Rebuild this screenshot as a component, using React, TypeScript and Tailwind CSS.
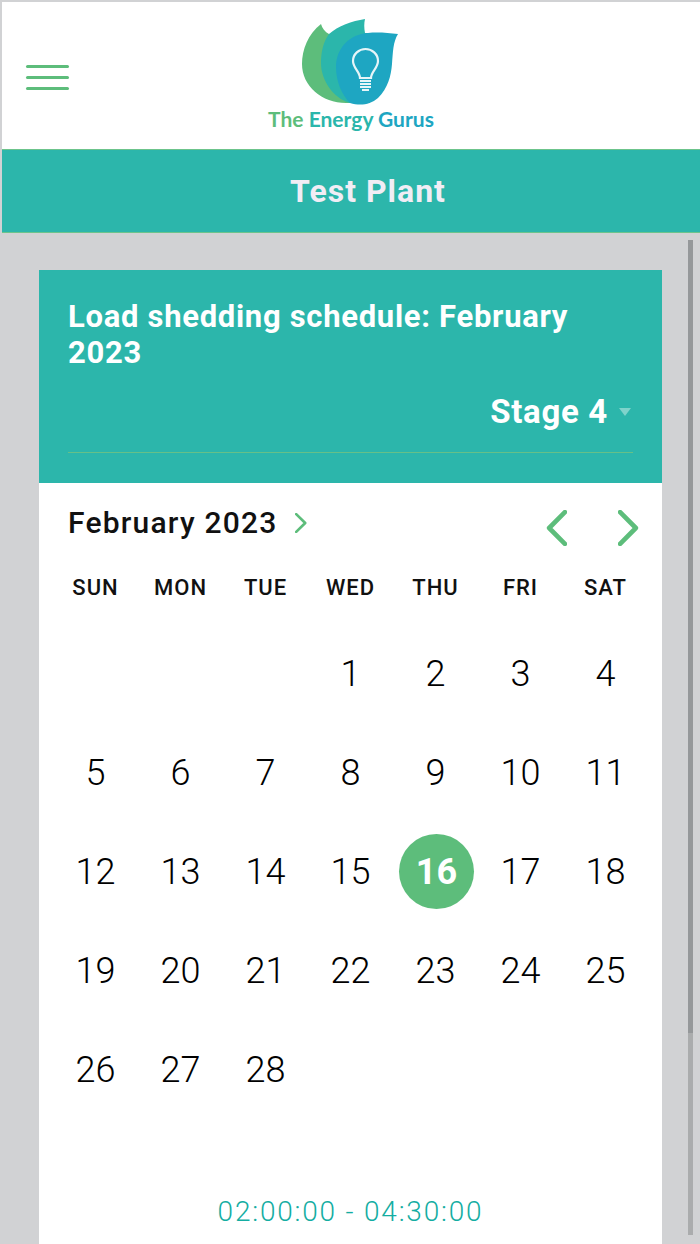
import React from "react";

const weekdays = ["SUN", "MON", "TUE", "WED", "THU", "FRI", "SAT"];
const blanks = [0, 1, 2];
const days = Array.from({ length: 28 }, (_, i) => i + 1);

function Logo() {
  return (
    <svg width="104" height="88" viewBox="0 0 104 88" className="block">
      <path d="M21 6 C8 16 2 32 2 46 C2 68 22 85 46 85 L60 85 L29 16 C25 14 22 10 21 6 Z" fill="#5dbd7b" />
      <path d="M65 1 C52 3 38 8 29 16 C23 24 21 35 21 45 C21 62 33 80 50 85 L70 85 L70 15 L65 15 C64 10 64 5 65 1 Z" fill="#2bb6ab" />
      <path d="M98 16 C88 15 78 14 68 15 C50 16 36 30 36 49 C36 64 42 77 50 85 C60 88 70 87 78 80 C88 70 91 58 92 46 C93 34 93 24 98 16 Z" fill="#1ea6c2" />
      <path d="M60 60 C60 54 53 50 53 43 C53 36 59 31 65.5 31 C72 31 78 36 78 43 C78 50 71 54 71 60 Z" fill="none" stroke="#e6f5f8" strokeWidth="2.2" />
      <path d="M60 63 H71 M60 66 H71 M60 69 H71 M62 72 H69" stroke="#e6f5f8" strokeWidth="2" />
    </svg>
  );
}

function Chevron({ dir, className }: { dir: "left" | "right"; className: string }) {
  return (
    <svg viewBox="0 0 20 34" className={className} fill="none" stroke="#5dbd7b" strokeWidth="4.4" strokeLinecap="round" strokeLinejoin="round" preserveAspectRatio="none">
      <path d={dir === "left" ? "M18 2 L3 17 L18 32" : "M2 2 L17 17 L2 32"} />
    </svg>
  );
}

export default function App() {
  return (
    <div className="relative h-[1244px] w-[700px] overflow-hidden bg-[#d1d2d4] pl-[2px] pt-[2px] font-['Roboto',sans-serif]">
      <header className="relative flex h-[147px] items-center bg-white pl-6">
        <div className="mt-1 flex w-[43px] flex-col gap-[8px]">
          <span className="h-[3px] rounded-full bg-[#5dbd7b]" />
          <span className="h-[3px] rounded-full bg-[#5dbd7b]" />
          <span className="h-[3px] rounded-full bg-[#5dbd7b]" />
        </div>
        <div className="absolute left-[266px] top-[16px] flex w-[168px] flex-col items-center">
          <Logo />
          <div className="mt-[1px] -translate-x-[1px] whitespace-nowrap font-['Lato',sans-serif] text-[21px] font-bold leading-[24px]">
            <span className="text-[#5dbd7b]">The </span>
            <span className="text-[#2bb6ab]">Energy </span>
            <span className="text-[#1ea6c2]">Gurus</span>
          </div>
        </div>
      </header>

      <div className="flex h-[84px] items-center justify-center border-y border-[#6cc48c] bg-[#2cb6ab] pl-[34px] text-[32px] font-bold tracking-[1px] text-[#f1edf5]">
        Test Plant
      </div>

      <main className="relative ml-[37px] mt-[37px] h-[974px] w-[623px] bg-white">
        <section className="h-[213px] bg-[#2cb6ab] px-[29px] pt-[29px] text-white">
          <h1 className="text-[31px] font-bold leading-[36px] tracking-[0.7px]">Load shedding schedule: February 2023</h1>
          <div className="mt-[18px] flex h-[64px] items-start justify-end gap-[11px] border-b border-[#66c088] text-[33px] font-bold leading-[46px] tracking-[0.7px]">
            <span>Stage 4</span>
            <span className="mr-[2px] mt-[19px] h-0 w-0 border-x-[6.5px] border-t-[8px] border-x-transparent border-t-[#7fd3cb]" />
          </div>
        </section>

        <section className="px-[14px]">
          <div className="flex items-center justify-between pl-[15px] pr-[9px] pt-[17px]">
            <div className="flex items-center gap-[18px] text-[30px] font-medium leading-[40px] tracking-[1.2px] text-[#111]">
              <span>February 2023</span>
              <Chevron dir="right" className="h-[20px] w-[12px]" />
            </div>
            <div className="flex items-center gap-[51px] pt-[10px]">
              <Chevron dir="left" className="h-[36px] w-[21px]" />
              <Chevron dir="right" className="h-[36px] w-[21px]" />
            </div>
          </div>

          <div className="grid grid-cols-7">
            {weekdays.map((d) => (
              <div key={d} className="pt-[22px] text-center text-[22px] font-medium leading-[40px] tracking-[1px] text-[#111]">
                {d}
              </div>
            ))}
          </div>

          <div className="mt-[16px] grid auto-rows-[99px] grid-cols-7">
            {blanks.map((b) => (
              <div key={b} />
            ))}
            {days.map((d) => (
              <div key={d} className="flex items-center justify-center text-[36px] font-light leading-none text-black">
                {d === 16 ? (
                  <span className="ml-[2px] flex h-[75px] w-[75px] items-center justify-center rounded-full bg-[#5dbd7b] font-bold text-white">16</span>
                ) : (
                  d
                )}
              </div>
            ))}
          </div>

          <div className="mt-[73px] text-center text-[28px] font-light leading-[40px] tracking-[1.8px] text-[#14ada2]">02:00:00 - 04:30:00</div>
        </section>
      </main>

      <div className="absolute left-[688px] top-[240px] h-[995px] w-[5px] bg-[#aaacad]">
        <div className="h-[793px] w-full bg-[#95989a]" />
      </div>
    </div>
  );
}
